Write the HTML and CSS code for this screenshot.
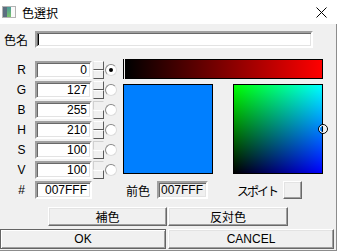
FILE: index.html
```html
<!DOCTYPE html>
<html lang="ja">
<head>
  <meta charset="UTF-8">
  <title>色選択</title>
  <link rel="stylesheet" href="styles.css">
</head>
<body>
  <div class="dialog">
    <div class="titlebar">
      <svg class="app-icon" width="14" height="12" viewBox="0 0 14 12">
        <defs>
          <linearGradient id="ig" x1="0" y1="0" x2="0" y2="1">
            <stop offset="0" stop-color="#4a9a9a"/>
            <stop offset="1" stop-color="#7cc46a"/>
          </linearGradient>
        </defs>
        <rect x="0.5" y="0.5" width="13" height="11" fill="#e8e8e8" stroke="#b4b4b4"/>
        <rect x="1" y="1" width="4" height="10" fill="#5c6f80"/>
        <rect x="5" y="1" width="4" height="10" fill="url(#ig)"/>
        <rect x="9" y="1" width="4" height="10" fill="#fafafa"/>
      </svg>
      <span class="title">色選択</span>
      <svg class="close" width="11" height="11" viewBox="0 0 11 11">
        <path d="M0.5 0.5 L10.5 10.5 M10.5 0.5 L0.5 10.5" stroke="#000" stroke-width="1" fill="none"/>
      </svg>
    </div>

    <div class="client">
      <div class="name-row">
        <span class="name-label">色名</span>
        <div class="field name-field"><span class="caret"></span></div>
      </div>

      <div class="main">
        <div class="channels">
          <div class="ch-row">
            <span class="ch-label">R</span>
            <div class="field ch-field">0</div>
            <div class="spin"><i></i><i></i></div>
            <span class="radio on"></span>
          </div>
          <div class="ch-row">
            <span class="ch-label">G</span>
            <div class="field ch-field">127</div>
            <div class="spin"><i></i><i></i></div>
            <span class="radio"></span>
          </div>
          <div class="ch-row">
            <span class="ch-label">B</span>
            <div class="field ch-field">255</div>
            <div class="spin"><i class="off"></i><i></i></div>
            <span class="radio"></span>
          </div>
          <div class="ch-row">
            <span class="ch-label">H</span>
            <div class="field ch-field">210</div>
            <div class="spin"><i></i><i></i></div>
            <span class="radio"></span>
          </div>
          <div class="ch-row">
            <span class="ch-label">S</span>
            <div class="field ch-field">100</div>
            <div class="spin"><i class="off"></i><i></i></div>
            <span class="radio"></span>
          </div>
          <div class="ch-row">
            <span class="ch-label">V</span>
            <div class="field ch-field">100</div>
            <div class="spin"><i class="off"></i><i></i></div>
            <span class="radio"></span>
          </div>
          <div class="ch-row">
            <span class="ch-label">#</span>
            <div class="field ch-field">007FFF</div>
          </div>
        </div>

        <div class="visual">
          <div class="bar-row">
            <span class="bar-thumb"></span>
            <div class="bar"></div>
          </div>
          <div class="panels">
            <div class="preview"></div>
            <div class="plane"><span class="plane-thumb"></span></div>
          </div>
          <div class="info-row">
            <span class="prev-label">前色</span>
            <div class="field prev-field">007FFF</div>
            <span class="dropper-label">スポイト</span>
            <button class="btn dropper"></button>
          </div>
        </div>
      </div>

      <div class="btn-row tools">
        <button class="btn comp">補色</button>
        <button class="btn inv">反対色</button>
      </div>
      <div class="btn-row actions">
        <button class="btn ok">OK</button>
        <button class="btn cancel">CANCEL</button>
      </div>
    </div>
  </div>
</body>
</html>
```

FILE: styles.css
```css
* {
  box-sizing: border-box;
}
body {
  margin: 0;
  background: #fff;
  font-family: "Liberation Sans", "Noto Sans CJK JP", sans-serif;
  font-size: 12px;
  color: #000;
}
.dialog {
  width: 339px;
  height: 251px;
}
.titlebar {
  height: 24px;
  display: flex;
  align-items: center;
  background: #fff;
}
.app-icon {
  margin-left: 2px;
}
.title {
  margin-left: 6px;
  font-family: "Noto Sans CJK JP", sans-serif;
  font-size: 12px;
}
.close {
  margin-left: auto;
  margin-right: 12px;
}
.client {
  width: 337px;
  height: 227px;
  background: #f0f0f0;
  border-right: 1px solid #8c8c8c;
  border-bottom: 1px solid #8c8c8c;
}
.field {
  background: #fff;
  border: 2px solid;
  border-color: #a0a0a0 #fff #fff #a0a0a0;
  box-shadow: inset 1px 1px #696969, inset -1px -1px #e3e3e3;
  line-height: 14px;
  white-space: nowrap;
}
.name-row {
  display: flex;
  align-items: center;
  padding-top: 7px;
}
.name-label {
  width: 35px;
  padding-left: 4px;
  font-family: "Noto Sans CJK JP", sans-serif;
}
.name-field {
  width: 278px;
  height: 17px;
  padding: 1px 1px;
}
.caret {
  display: block;
  width: 1px;
  height: 11px;
  background: #000;
}
.main {
  display: flex;
  margin-top: 11px;
}
.channels {
  width: 123px;
  padding-top: 1px;
}
.ch-row {
  display: flex;
  align-items: center;
  height: 20px;
}
.ch-label {
  width: 35px;
  padding-left: 8px;
  text-align: center;
}
.ch-field {
  width: 57px;
  height: 18px;
  text-align: right;
  padding-right: 3px;
}
.spin {
  width: 11px;
  height: 18px;
  margin-left: 1px;
  display: flex;
  flex-direction: column;
}
.spin i {
  flex: 1;
  background: #f0f0f0;
  border: 1px solid;
  border-color: #fff #5a5a5a #5a5a5a #e3e3e3;
}
.spin i.off {
  border-color: #d0d0d0 #f0f0f0 #f0f0f0 #d0d0d0;
}
.radio {
  position: relative;
  width: 12px;
  height: 12px;
  margin-left: 1px;
  border-radius: 50%;
  background: #fff;
  border: 1px solid;
  border-color: #8a8a8a #dcdcdc #dcdcdc #8a8a8a;
}
.radio.on::after {
  content: "";
  position: absolute;
  left: 3px;
  top: 3px;
  width: 4px;
  height: 4px;
  border-radius: 50%;
  background: #000;
}
.visual {
  width: 200px;
}
.bar-row {
  position: relative;
  height: 20px;
  padding-left: 2px;
}
.bar-thumb {
  position: absolute;
  left: 0;
  top: 0;
  width: 1px;
  height: 20px;
  background: #000;
}
.bar {
  width: 198px;
  height: 20px;
  border: 1px solid #000;
  background: linear-gradient(to right, #000, #f00);
}
.panels {
  display: flex;
  gap: 20px;
  margin-top: 5px;
}
.preview {
  width: 90px;
  height: 90px;
  border: 1px solid #000;
  background: #007fff;
}
.plane {
  position: relative;
  width: 90px;
  height: 90px;
  border: 1px solid #000;
  background: linear-gradient(to right, #000, #00f), linear-gradient(to top, #000, #0f0);
  background-blend-mode: screen;
}
.plane-thumb {
  position: absolute;
  right: -6px;
  top: 39px;
  width: 10px;
  height: 10px;
  border-radius: 50%;
  border: 1px solid #000;
  box-shadow: inset 0 0 0 1px #fff;
}
.info-row {
  display: flex;
  align-items: center;
  margin-top: 7px;
  height: 18px;
}
.prev-label {
  width: 34px;
  padding-left: 3px;
  font-family: "Noto Sans CJK JP", sans-serif;
}
.prev-field {
  width: 51px;
  height: 18px;
  padding-left: 2px;
  background: #f0f0f0;
}
.dropper-label {
  width: 46px;
  margin-left: 29px;
  font-family: "Noto Sans CJK JP", sans-serif;
  font-size: 12px;
  letter-spacing: -2px;
}
.btn {
  margin: 0;
  padding: 0;
  background: #f0f0f0;
  border: 1px solid;
  border-color: #fff #696969 #696969 #fff;
  box-shadow: inset -1px -1px #a0a0a0, inset 1px 1px #e3e3e3;
  font-family: "Liberation Sans", "Noto Sans CJK JP", sans-serif;
  font-size: 12px;
  color: #000;
}
.dropper {
  width: 19px;
  height: 18px;
}
.btn-row {
  display: flex;
}
.tools {
  margin-top: 7px;
  padding-left: 48px;
  gap: 1px;
}
.comp {
  width: 119px;
  height: 19px;
}
.inv {
  width: 120px;
  height: 19px;
}
.actions {
  margin-top: 3px;
  gap: 2px;
}
.ok,
.cancel {
  width: 166px;
  height: 20px;
}
.ok {
  border-color: #646464;
  box-shadow: inset 1px 1px #fff, inset -1px -1px #a0a0a0;
}
```
